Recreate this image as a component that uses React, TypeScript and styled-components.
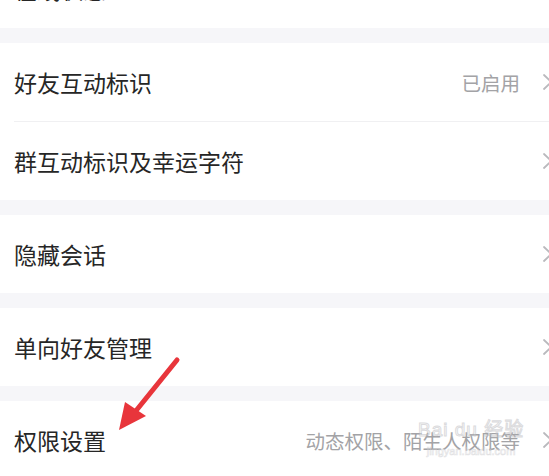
import React from "react";
import styled, { createGlobalStyle } from "styled-components";

const GlobalStyle = createGlobalStyle`
  html, body {
    margin: 0;
    padding: 0;
    background: #ffffff;
    overflow: hidden;
  }
  body {
    font-family: "Noto Sans CJK SC", "Noto Sans", sans-serif;
  }
`;

const Page = styled.div`
  position: relative;
  width: 549px;
  height: 476px;
  overflow: hidden;
  background: #f6f6f9;
`;

const List = styled.div`
  display: flex;
  flex-direction: column;
  margin-top: -50px;
`;

const Group = styled.div`
  display: flex;
  flex-direction: column;
  background: #ffffff;
  & + & {
    margin-top: 15px;
  }
`;

const Row = styled.div`
  display: flex;
  align-items: center;
  height: 78px;
  padding-left: 14px;
  margin-right: -5px;
  box-sizing: border-box;
`;

const Divider = styled.div`
  height: 1px;
  margin-left: 14px;
  background: #f0f0f2;
`;

const Label = styled.span`
  flex: 1;
  font-size: 23px;
  color: #262626;
  white-space: nowrap;
`;

const Value = styled.span`
  font-size: 19.5px;
  color: #a3a3a6;
  white-space: nowrap;
  margin-right: 22px;
`;

const Chevron = styled.svg`
  flex: none;
  width: 12px;
  height: 18px;
`;

const Arrow = styled.svg`
  position: absolute;
  left: 100px;
  top: 350px;
  width: 90px;
  height: 90px;
  pointer-events: none;
`;

const Watermark = styled.div`
  position: absolute;
  left: 418px;
  top: 414px;
  display: flex;
  flex-direction: column;
  align-items: center;
  opacity: 0.5;
  pointer-events: none;
`;

const MarkTitle = styled.span`
  font-family: "Liberation Sans", "Noto Sans CJK SC", sans-serif;
  font-size: 19px;
  color: #ffffff;
  -webkit-text-stroke: 1px #b8b8bc;
  letter-spacing: 1px;
`;

const MarkUrl = styled.span`
  font-family: "Liberation Sans", sans-serif;
  font-size: 11px;
  color: #ffffff;
  -webkit-text-stroke: 0.6px #c4c4c8;
  margin-top: 4px;
`;

function Arrowhead() {
  return (
    <Chevron viewBox="0 0 12 18">
      <polyline
        points="2,2 9.5,9 2,16"
        fill="none"
        stroke="#b9b9bd"
        strokeWidth="1.8"
        strokeLinecap="round"
        strokeLinejoin="round"
      />
    </Chevron>
  );
}

type Item = { label: string; value?: string };

const groups: Item[][] = [
  [{ label: "在线状态", value: "全部" }],
  [{ label: "好友互动标识", value: "已启用" }, { label: "群互动标识及幸运字符" }],
  [{ label: "隐藏会话" }],
  [{ label: "单向好友管理" }],
  [{ label: "权限设置", value: "动态权限、陌生人权限等" }],
];

export default function App() {
  return (
    <>
      <GlobalStyle />
      <Page>
        <List>
          {groups.map((items, gi) => (
            <Group key={gi}>
              {items.map((item, i) => (
                <React.Fragment key={item.label}>
                  {i > 0 && <Divider />}
                  <Row>
                    <Label>{item.label}</Label>
                    {item.value && <Value>{item.value}</Value>}
                    <Arrowhead />
                  </Row>
                </React.Fragment>
              ))}
            </Group>
          ))}
        </List>
        <Arrow viewBox="0 0 90 90">
          <line
            x1="77"
            y1="10"
            x2="35"
            y2="62"
            stroke="#e8353b"
            strokeWidth="5"
            strokeLinecap="round"
          />
          <polygon points="19,80 25,52 46,66" fill="#e8353b" />
        </Arrow>
        <Watermark>
          <MarkTitle>Bai du 经验</MarkTitle>
          <MarkUrl>jingyan.baidu.com</MarkUrl>
        </Watermark>
      </Page>
    </>
  );
}
